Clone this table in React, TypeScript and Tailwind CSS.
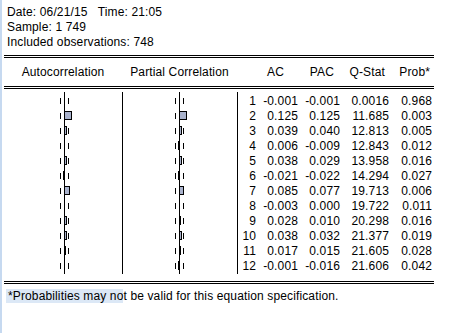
import React from 'react';

const rows = [
    { lag: 1, ac: -0.001, pac: -0.001, q: '0.0016', p: '0.968' },
    { lag: 2, ac: 0.125, pac: 0.125, q: '11.685', p: '0.003' },
    { lag: 3, ac: 0.039, pac: 0.04, q: '12.813', p: '0.005' },
    { lag: 4, ac: 0.006, pac: -0.009, q: '12.843', p: '0.012' },
    { lag: 5, ac: 0.038, pac: 0.029, q: '13.958', p: '0.016' },
    { lag: 6, ac: -0.021, pac: -0.022, q: '14.294', p: '0.027' },
    { lag: 7, ac: 0.085, pac: 0.077, q: '19.713', p: '0.006' },
    { lag: 8, ac: -0.003, pac: 0.0, q: '19.722', p: '0.011' },
    { lag: 9, ac: 0.028, pac: 0.01, q: '20.298', p: '0.016' },
    { lag: 10, ac: 0.038, pac: 0.032, q: '21.377', p: '0.019' },
    { lag: 11, ac: 0.017, pac: 0.015, q: '21.605', p: '0.028' },
    { lag: 12, ac: -0.001, pac: -0.016, q: '21.606', p: '0.042' },
];

const fmt = (v: number) => v.toFixed(3);

// little bar chart drawn per correlogram column
function Correlogram({ values, width, center }: { values: number[]; width: number; center: number }) {
    const h = 182;
    return (
        <svg width={width} height={h} shapeRendering="crispEdges" className="block">
            {values.map((v, i) => {
                const top = 2 + i * 15;
                return (
                    <g key={'d' + i}>
                        <line x1={center - 4 + 0.5} x2={center - 4 + 0.5} y1={top + 4} y2={top + 10} stroke="#000" />
                        <line x1={center + 4 + 0.5} x2={center + 4 + 0.5} y1={top + 4} y2={top + 10} stroke="#000" />
                    </g>
                );
            })}
            {values.map((v, i) => {
                const top = 2 + i * 15;
                const w = Math.round(Math.abs(v) * 56 + 0.001);
                if (w === 0) return null;
                const x = v > 0 ? center : center - w;
                return (
                    <rect key={'b' + i} x={x + 0.5} y={top + 2.5} width={w} height={8} fill="#a9b2cc" stroke="#000" />
                );
            })}
            <line x1={center + 0.5} x2={center + 0.5} y1={0} y2={h} stroke="#000" />
        </svg>
    );
}

function DoubleRule() {
    return <div className="h-[3px] border-y border-black" />;
}

export default function App() {
    return (
        <div className="h-[333px] w-[469px] bg-white border-l-2 border-[#c6d9f0] font-['Liberation_Sans',Arial,sans-serif] text-[12px] leading-[15px] tracking-[0.13px] text-black">
            {/* Header info */}
            <div className="pl-[5px] pt-[5px]">
                <div className="whitespace-pre">Date: 06/21/15   Time: 21:05</div>
                <div>Sample: 1 749</div>
                <div>Included observations: 748</div>
            </div>

            <div className="ml-[2px] mt-[5px] w-[430px]">
                <DoubleRule />
                {/* Column headers */}
                <div className="flex h-[28px] items-center">
                    <div className="w-[118px] text-center">Autocorrelation</div>
                    <div className="w-[115px] text-center">Partial Correlation</div>
                    <div className="flex">
                        <div className="w-[19px]" />
                        <div className="w-[42px] pr-[14px] text-right">AC</div>
                        <div className="w-[42px] pr-[6px] text-right">PAC</div>
                        <div className="w-[49px] pr-[4px] text-right">Q-Stat</div>
                        <div className="w-[43px] pr-[2px] text-right">Prob*</div>
                    </div>
                </div>
                <DoubleRule />

                {/* Body */}
                <div className="flex pt-[3px]">
                    <div className="w-[118px]">
                        <Correlogram values={rows.map((r) => r.ac)} width={118} center={60} />
                    </div>
                    <div className="w-[115px] border-l border-black">
                        <Correlogram values={rows.map((r) => r.pac)} width={114} center={56} />
                    </div>
                    <div className="flex-1 border-l border-black pt-[2px]">
                        {rows.map((r) => (
                            <div key={r.lag} className="flex h-[15px]">
                                <div className="w-[18px] text-right">{r.lag}</div>
                                <div className="w-[42px] text-right">{fmt(r.ac)}</div>
                                <div className="w-[42px] text-right">{fmt(r.pac)}</div>
                                <div className="w-[49px] text-right">{r.q}</div>
                                <div className="w-[43px] text-right">{r.p}</div>
                            </div>
                        ))}
                    </div>
                </div>

                <div className="mt-[7px]">
                    <DoubleRule />
                </div>
                <p className="mt-[5px] pl-[2px]">
                    <span className="bg-[#dce8f6] pl-[2px]">*Probabilities may no</span>t be valid for this equation specification.
                </p>
            </div>
        </div>
    );
}
